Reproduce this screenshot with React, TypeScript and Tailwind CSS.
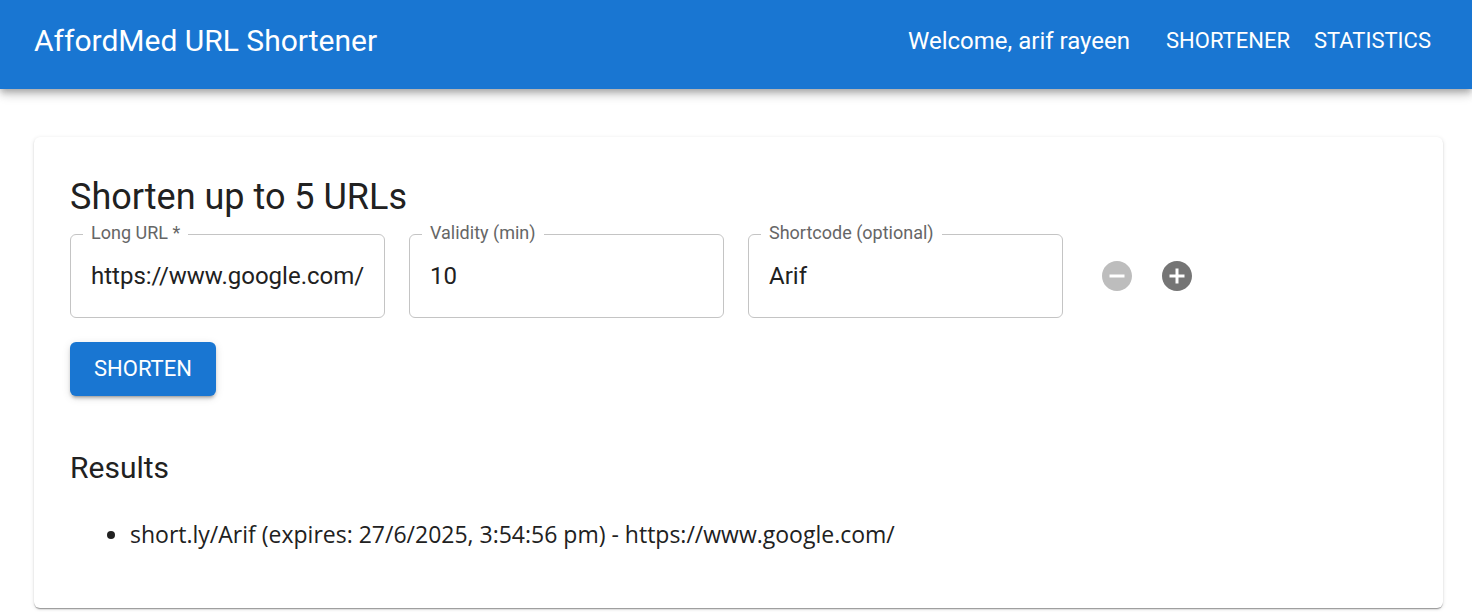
import { useState } from "react";
import { MdAddCircle, MdRemoveCircle } from "react-icons/md";

type FieldProps = {
  id: string;
  label: string;
  value: string;
  onChange: (value: string) => void;
  inputMode?: "text" | "numeric" | "url";
  required?: boolean;
};

function OutlinedField({ id, label, value, onChange, inputMode = "text", required = false }: FieldProps) {
  return (
    <div className="relative w-[315px] rounded-md border border-[#c4c4c4] focus-within:border-[#1976d2]">
      <label htmlFor={id} className="absolute -top-3 left-3 bg-white px-2 text-lg leading-5 text-[#666666]">
        {label}
        {required && " *"}
      </label>
      <input
        id={id}
        type="text"
        inputMode={inputMode}
        required={required}
        value={value}
        onChange={(e) => onChange(e.target.value)}
        className="block h-[82px] w-full border-x-[20px] border-transparent bg-transparent text-2xl text-[#212121] outline-none"
      />
    </div>
  );
}

type Row = { url: string; validity: string; code: string };

const emptyRow: Row = { url: "", validity: "30", code: "" };

export default function App() {
  const [rows, setRows] = useState<Row[]>([{ url: "https://www.google.com/", validity: "10", code: "Arif" }]);

  const update = (index: number, patch: Partial<Row>) =>
    setRows(rows.map((row, i) => (i === index ? { ...row, ...patch } : row)));

  return (
    <div className="bg-white pb-1 font-[Roboto,sans-serif] text-[#212121]">
      <header className="flex items-center bg-[#1976d2] pt-3.5 pr-[29px] pb-[21px] pl-[34px] text-white shadow-[0_3px_6px_-1px_rgba(0,0,0,0.2),0_6px_8px_0_rgba(0,0,0,0.14),0_2px_15px_0_rgba(0,0,0,0.12)]">
        <h1 className="grow text-3xl leading-[48px]">AffordMed URL Shortener</h1>
        <p className="mr-6 text-2xl leading-9">Welcome, arif rayeen</p>
        <nav className="flex">
          <a href="#shortener" className="px-3 py-2 text-[22px] leading-[38px] uppercase">
            Shortener
          </a>
          <a href="#statistics" className="px-3 py-2 text-[22px] leading-[38px] uppercase">
            Statistics
          </a>
        </nav>
      </header>

      <main className="mt-12 mr-[29px] ml-[34px] rounded-md bg-white px-9 pt-9 pb-14 shadow-[0_3px_2px_-2px_rgba(0,0,0,0.2),0_1px_1px_0_rgba(0,0,0,0.24),0_1px_4px_0_rgba(0,0,0,0.12)]">
        <h2 className="text-4xl leading-[48px]">Shorten up to 5 URLs</h2>
        <form onSubmit={(e) => e.preventDefault()}>
          {rows.map((row, i) => (
            <div key={i} className="mt-[13px] mb-6 flex flex-wrap items-center gap-6">
              <OutlinedField
                id={`url-${i}`}
                label="Long URL"
                required
                inputMode="url"
                value={row.url}
                onChange={(url) => update(i, { url })}
              />
              <OutlinedField
                id={`validity-${i}`}
                label="Validity (min)"
                inputMode="numeric"
                value={row.validity}
                onChange={(validity) => update(i, { validity })}
              />
              <OutlinedField
                id={`code-${i}`}
                label="Shortcode (optional)"
                value={row.code}
                onChange={(code) => update(i, { code })}
              />
              <div className="flex">
                <button
                  type="button"
                  aria-label="Remove URL"
                  disabled={rows.length === 1}
                  onClick={() => setRows(rows.filter((_, j) => j !== i))}
                  className="rounded-full p-3 text-[#757575] disabled:text-[#bdbdbd]"
                >
                  <MdRemoveCircle className="size-9" />
                </button>
                <button
                  type="button"
                  aria-label="Add URL"
                  disabled={rows.length >= 5}
                  onClick={() => setRows([...rows, emptyRow])}
                  className="rounded-full p-3 text-[#757575] disabled:text-[#bdbdbd]"
                >
                  <MdAddCircle className="size-9" />
                </button>
              </div>
            </div>
          ))}
          <button
            type="submit"
            className="block rounded-md bg-[#1976d2] px-6 py-2 text-[22px] leading-[38px] text-white uppercase shadow-[0_4px_2px_-3px_rgba(0,0,0,0.2),0_3px_3px_0_rgba(0,0,0,0.14),0_2px_8px_0_rgba(0,0,0,0.12)]"
          >
            Shorten
          </button>
        </form>

        <section className="mt-12">
          <h3 className="text-3xl leading-[48px]">Results</h3>
          <ul className="mt-6 list-disc pl-[60px] font-['Open_Sans','Noto_Sans',sans-serif] text-[23px] leading-9">
            <li>short.ly/Arif (expires: 27/6/2025, 3:54:56 pm) - https://www.google.com/</li>
          </ul>
        </section>
      </main>
    </div>
  );
}
